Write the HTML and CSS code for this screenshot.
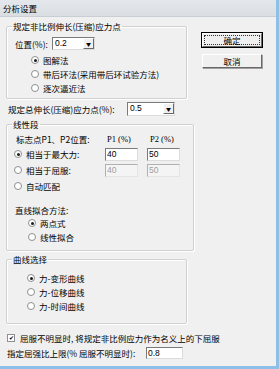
FILE: index.html
```html
<!DOCTYPE html>
<html lang="zh-CN">
<head>
    <meta charset="UTF-8">
    <title>分析设置</title>
    <link rel="stylesheet" href="styles.css">
</head>
<body>
    <div class="window">
        <div class="titlebar">分析设置</div>

        <div class="main">
            <div class="left">
                <fieldset class="group g1">
                    <legend>规定非比例伸长(压缩)应力点</legend>
                    <div class="row pos-row">
                        <span class="lbl">位置(%):</span>
                        <span class="combo c1"><span class="val">0.2</span><span class="drop">▼</span></span>
                    </div>
                    <div class="row radio-row r1"><span class="radio on"></span>图解法</div>
                    <div class="row radio-row r1"><span class="radio"></span>带后环法(采用带后环试验方法)</div>
                    <div class="row radio-row r1"><span class="radio"></span>逐次逼近法</div>
                </fieldset>

                <div class="row total-row">
                    <span class="lbl">规定总伸长(压缩)应力点(%):</span>
                    <span class="combo c2"><span class="val">0.5</span><span class="drop">▼</span></span>
                </div>

                <fieldset class="group g2">
                    <legend>线性段</legend>
                    <div class="row head-row">
                        <span class="mark">标志点P1、P2位置:</span>
                        <span class="col">P1 (%)</span>
                        <span class="col">P2 (%)</span>
                    </div>
                    <div class="row point-row">
                        <span class="opt"><span class="radio on"></span>相当于最大力:</span>
                        <span class="input">40</span>
                        <span class="input">50</span>
                    </div>
                    <div class="row point-row">
                        <span class="opt"><span class="radio"></span>相当于屈服:</span>
                        <span class="input off">40</span>
                        <span class="input off">50</span>
                    </div>
                    <div class="row point-row">
                        <span class="opt"><span class="radio"></span>自动匹配</span>
                    </div>
                    <div class="row fit-title">直线拟合方法:</div>
                    <div class="row radio-row r2"><span class="radio on"></span>两点式</div>
                    <div class="row radio-row r2"><span class="radio"></span>线性拟合</div>
                </fieldset>

                <fieldset class="group g3">
                    <legend>曲线选择</legend>
                    <div class="row radio-row r3"><span class="radio on"></span>力-变形曲线</div>
                    <div class="row radio-row r3"><span class="radio"></span>力-位移曲线</div>
                    <div class="row radio-row r3"><span class="radio"></span>力-时间曲线</div>
                </fieldset>
            </div>

            <div class="right">
                <button class="btn default"><span class="focus">确定</span></button>
                <button class="btn">取消</button>
            </div>
        </div>

        <div class="row check-row"><span class="check">✔</span>屈服不明显时, 将规定非比例应力作为名义上的下屈服</div>
        <div class="row ratio-row">
            <span class="lbl">指定屈强比上限(% 屈服不明显时):</span>
            <span class="input ratio">0.8</span>
        </div>
    </div>
</body>
</html>
```

FILE: styles.css
```css
* {
    margin: 0;
    padding: 0;
    box-sizing: border-box;
}

body {
    font-family: "Noto Sans CJK SC", "Noto Sans", sans-serif;
    font-size: 8.5px;
    color: #000;
    background: #f0f0f0;
}

.window {
    width: 279px;
    height: 369px;
    background: #f0f0f0;
    border-right: 3px solid #8cc0e8;
    border-bottom: 3px solid #8cc0e8;
    display: flex;
    flex-direction: column;
}

.titlebar {
    height: 17px;
    line-height: 16px;
    padding-left: 3px;
    background: linear-gradient(to bottom, #e4e7eb, #dadee3);
    border-bottom: 1px solid #c9ced4;
}

.main {
    display: flex;
}

.left {
    width: 181px;
    margin-left: 6px;
}

.right {
    display: flex;
    flex-direction: column;
    gap: 7px;
    margin-left: 15px;
    padding-top: 16px;
}

.row {
    display: flex;
    align-items: center;
    white-space: nowrap;
}

/* group boxes */
.group {
    border: 1px solid #d0d0d0;
    border-radius: 2px;
    box-shadow: 1px 1px 0 #fff, inset 1px 1px 0 #fff;
    padding: 0;
}

.group legend {
    margin-left: 5px;
    padding: 0 1px;
    line-height: 10px;
}

.g1 {
    margin-top: 4px;
    padding-top: 6px;
    padding-bottom: 3px;
}

.g2 {
    margin-top: 3px;
    padding-top: 4px;
    padding-bottom: 6px;
}

.g3 {
    margin-top: 3px;
    padding-top: 7px;
    padding-bottom: 10px;
}

/* controls */
.combo {
    display: flex;
    height: 13px;
    background: #fff;
    border: 1px solid;
    border-color: #7a7a7a #dcdcdc #dcdcdc #7a7a7a;
}

.combo .val {
    flex: 1;
    line-height: 11px;
    padding-left: 2px;
    font-family: "Liberation Sans", sans-serif;
}

.combo .drop {
    width: 11px;
    height: 11px;
    background: #f0f0f0;
    border: 1px solid;
    border-color: #fff #696969 #696969 #fff;
    font-size: 5px;
    line-height: 9px;
    text-align: center;
}

.input {
    width: 33px;
    height: 13px;
    background: #fff;
    border: 1px solid;
    border-color: #7a7a7a #dcdcdc #dcdcdc #7a7a7a;
    line-height: 11px;
    padding-left: 1px;
    font-family: "Liberation Sans", sans-serif;
}

.input.off {
    background: #f4f4f4;
    color: #a0a0a0;
    border-color: #b0b0b0 #e4e4e4 #e4e4e4 #b0b0b0;
}

.radio {
    width: 8px;
    height: 8px;
    border: 1px solid #8e8f8f;
    border-radius: 50%;
    background: #fff;
    margin-right: 4px;
    flex-shrink: 0;
    position: relative;
}

.radio.on::after {
    content: "";
    position: absolute;
    left: 1.5px;
    top: 1.5px;
    width: 3px;
    height: 3px;
    border-radius: 50%;
    background: #1c1c1c;
}

.check {
    width: 8px;
    height: 8px;
    border: 1px solid #8e8f8f;
    background: #fff;
    font-size: 6px;
    line-height: 6px;
    text-align: center;
    margin: 0 5px 0 7px;
}

.btn {
    width: 60px;
    height: 14px;
    font: inherit;
    background: #f0f0f0;
    border: 1px solid;
    border-color: #fff #696969 #696969 #fff;
    box-shadow: 1px 1px 0 #a0a0a0;
}

.btn.default {
    outline: 1px solid #000;
    display: flex;
    padding: 1px;
}

.btn .focus {
    flex: 1;
    border: 1px dotted #333;
    line-height: 9px;
}

/* group 1 rows */
.pos-row {
    height: 13px;
    padding-left: 8px;
}

.pos-row .lbl {
    width: 37px;
}

.c1 {
    width: 43px;
}

.r1 {
    height: 14px;
    padding-left: 24px;
}

.pos-row + .r1 {
    margin-top: 3px;
}

.total-row {
    height: 14px;
    margin-top: 3px;
    padding-left: 2px;
}

.total-row .lbl {
    width: 119px;
}

.c2 {
    width: 48px;
    height: 14px;
}

/* group 2 rows */
.head-row {
    height: 12px;
    padding-left: 9px;
}

.head-row .mark {
    width: 91px;
}

.head-row .col {
    width: 43px;
    font-family: "Liberation Serif", serif;
}

.point-row {
    height: 14px;
    margin-top: 2px;
    padding-left: 7px;
}

.point-row .opt {
    display: flex;
    align-items: center;
    width: 91px;
}

.point-row .input + .input {
    margin-left: 9px;
}

.fit-title {
    height: 12px;
    margin-top: 11px;
    padding-left: 8px;
}

.r2 {
    height: 14px;
    padding-left: 21px;
}

.r3 {
    height: 14px;
    padding-left: 20px;
}

/* bottom rows */
.check-row {
    height: 14px;
    margin-top: 7px;
}

.ratio-row {
    height: 14px;
    margin-top: 1px;
    padding-left: 7px;
}

.ratio-row .lbl {
    width: 139px;
}

.input.ratio {
    width: 37px;
    height: 12px;
}
```
